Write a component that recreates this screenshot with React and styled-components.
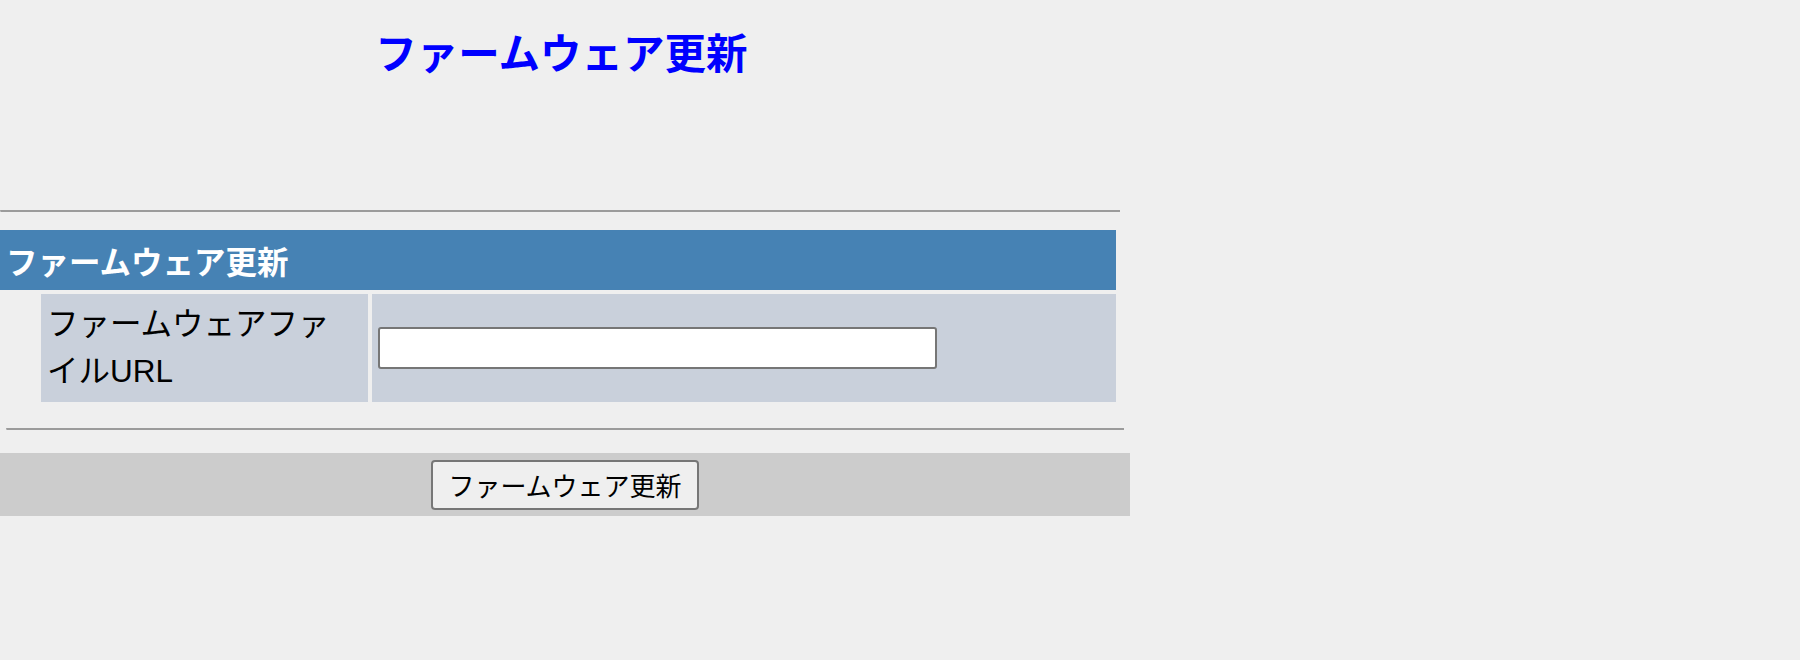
import React from "react";
import styled, { createGlobalStyle } from "styled-components";

const GlobalStyle = createGlobalStyle`
  html, body {
    margin: 0;
    padding: 0;
    background: #efefef;
  }
  body {
    font-family: "Liberation Sans", "Noto Sans CJK JP", sans-serif;
    color: #000;
  }
`;

const Page = styled.div`
  display: flex;
  flex-direction: column;
  align-items: flex-start;
  width: 1800px;
  height: 660px;
  background: #efefef;
`;

const Title = styled.h1`
  margin: 31px 0 0;
  width: 1123px;
  text-align: center;
  font-size: 41.5px;
  line-height: 48px;
  font-weight: bold;
  color: #0000ff;
  font-family: "Liberation Sans", "Noto Sans CJK JP", sans-serif;
`;

const Rule = styled.div`
  margin-top: ${(p) => p.$top}px;
  margin-left: ${(p) => p.$left || 0}px;
  width: ${(p) => p.$width}px;
  height: 0;
  border-top: 2px solid #9b9b9b;
  border-left: 1px solid #c9c9c9;
`;

const SectionHeader = styled.div`
  margin-top: 18px;
  width: 1116px;
  height: 60px;
  box-sizing: border-box;
  padding-left: 6px;
  display: flex;
  align-items: center;
  background: #4682b4;
  color: #ffffff;
  font-size: 31.5px;
  font-weight: bold;
`;

const FieldRow = styled.div`
  margin-top: 4px;
  margin-left: 41px;
  width: 1075px;
  display: flex;
  gap: 4px;
`;

const LabelCell = styled.div`
  width: 327px;
  flex: none;
  box-sizing: border-box;
  padding: 7px 12px 7px 6px;
  background: #c9d0db;
  font-size: 31.5px;
  line-height: 47px;
`;

const ValueCell = styled.div`
  flex: 1;
  display: flex;
  align-items: center;
  padding-left: 6px;
  background: #c9d0db;
`;

const UrlInput = styled.input`
  width: 559px;
  height: 42px;
  box-sizing: border-box;
  border: 2px solid #767676;
  border-radius: 3px;
  background: #ffffff;
  font-size: 24px;
  padding: 0 6px;
  outline: none;
`;

const ActionBar = styled.div`
  margin-top: 23px;
  width: 1130px;
  height: 63px;
  display: flex;
  align-items: center;
  justify-content: center;
  background: #cccccc;
`;

const SubmitButton = styled.button`
  width: 268px;
  height: 50px;
  box-sizing: border-box;
  border: 2px solid #767676;
  border-radius: 4px;
  background: #efefef;
  color: #000;
  font-family: "Liberation Sans", "Noto Sans CJK JP", sans-serif;
  font-size: 26px;
  padding: 0;
  cursor: pointer;
`;

export default function App() {
  return (
    <>
      <GlobalStyle />
      <Page>
        <Title>ファームウェア更新</Title>
        <Rule $top={131} $width={1119} />
        <SectionHeader>ファームウェア更新</SectionHeader>
        <FieldRow>
          <LabelCell>ファームウェアファイルURL</LabelCell>
          <ValueCell>
            <UrlInput type="text" name="firmware_url" />
          </ValueCell>
        </FieldRow>
        <Rule $top={26} $left={6} $width={1117} />
        <ActionBar>
          <SubmitButton type="button">ファームウェア更新</SubmitButton>
        </ActionBar>
      </Page>
    </>
  );
}
